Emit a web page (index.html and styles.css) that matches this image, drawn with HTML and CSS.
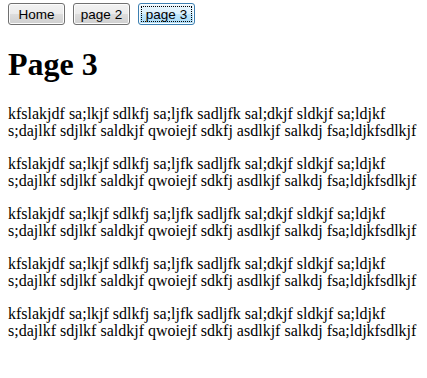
FILE: index.html
```html
<!DOCTYPE html>
<html lang="en">
<head>
  <meta charset="UTF-8">
  <title>Page 3</title>
  <link rel="stylesheet" href="styles.css">
</head>
<body>

<div class="nav">
  <button class="btn">Home</button>
  <button class="btn">page 2</button>
  <button class="btn active">page 3</button>
</div>

<h1 class="title">Page 3</h1>

<script>
  for (let i = 0; i < 5; i++) {
    document.write('<p class="para">kfslakjdf sa;lkjf sdlkfj sa;ljfk sadljfk sal;dkjf sldkjf sa;ldjkf<br>s;dajlkf sdjlkf saldkjf qwoiejf sdkfj asdlkjf salkdj fsa;ldjkfsdlkjf</p>');
  }
</script>

</body>
</html>
```

FILE: styles.css
```css
body {
  margin: 3px 8px 8px;
  font-family: "Liberation Sans", Arial, sans-serif;
  font-size: 16px;
  background: white;
  color: black;
}

.nav {
  display: flex;
  gap: 8px;
}

.btn {
  font-family: "Liberation Sans", Arial, sans-serif;
  font-size: 13.5px;
  width: 57px;
  height: 22px;
  padding: 0;
  border: 1px solid #707070;
  border-radius: 3px;
  background: linear-gradient(#f2f2f2 0%, #ebebeb 50%, #dddddd 51%, #cfcfcf 100%);
  color: black;
  box-shadow: inset 0 0 0 1px #fcfcfc;
}

.btn.active {
  border-color: #3c7fb1;
  background: linear-gradient(#eaf6fd 0%, #d9f0fc 50%, #bee6fd 51%, #a7d9f5 100%);
  outline: 1px dotted #000;
  outline-offset: -4px;
}

.title,
.para {
  font-family: "Liberation Serif", "Times New Roman", serif;
}

.title {
  font-size: 32px;
  margin: 21px 0 22px;
}

.para {
  margin: 16px 0;
  line-height: 17px;
  white-space: nowrap;
}
```
